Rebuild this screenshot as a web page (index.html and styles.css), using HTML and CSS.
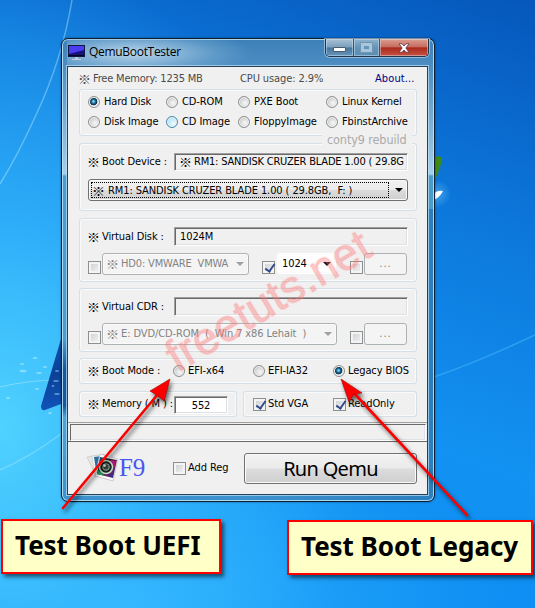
FILE: index.html
```html
<!DOCTYPE html>
<html lang="en">
<head>
<meta charset="utf-8">
<title>QemuBootTester</title>
<link rel="stylesheet" href="styles.css">
</head>
<body>
<div class="desktop">
  <svg class="wallpaper" width="535" height="608" viewBox="0 0 535 608">
    <defs>
      <linearGradient id="leg" x1="0" y1="0" x2="0" y2="1"><stop offset="0" stop-color="#0a52ac"/><stop offset=".5" stop-color="#0b4198"/><stop offset="1" stop-color="#1054b8"/></linearGradient>
      <radialGradient id="glow"><stop offset="0" stop-color="#7fd8ff" stop-opacity=".45"/><stop offset="1" stop-color="#7fd8ff" stop-opacity="0"/></radialGradient>
    </defs>
    <g fill="none" stroke="#bdf0ff">
      <path d="M72 0Q62 60 36 115Q18 155 0 184" stroke-width="1.5" opacity=".4"/>
      <path d="M0 387Q28 380 61 380" opacity=".45"/>
      <path d="M0 470Q28 458 61 434" stroke-width="1.5" opacity=".35"/>
      <path d="M434 377Q480 361 535 335" stroke="#58c2ff" stroke-width="1.5" opacity=".45"/>
    </g>
    <g fill="#c9f1ff" opacity=".5">
      <ellipse cx="23" cy="371" rx="3.5" ry="1.2"/><ellipse cx="35" cy="358" rx="2.5" ry="1"/><ellipse cx="39" cy="373" rx="3" ry="1"/><ellipse cx="37" cy="389" rx="2" ry="1"/><ellipse cx="8" cy="398" rx="2" ry="1"/><ellipse cx="45" cy="367" rx="2" ry="1"/><ellipse cx="50" cy="413" rx="2" ry="1"/><ellipse cx="22" cy="364" rx="2" ry="1"/>
    </g>
    <path d="M61 339L41 406Q41 411 45 410L61 404Z" fill="url(#leg)"/>
    <g fill="#8fd0f5" opacity=".55"><ellipse cx="57" cy="371" rx="2" ry="1"/><ellipse cx="56" cy="381" rx="3" ry="1"/><ellipse cx="57" cy="394" rx="3" ry="1"/><ellipse cx="53" cy="386" rx="1.5" ry="1"/></g>
    <circle cx="437" cy="194" r="14" fill="url(#glow)"/>
    <path d="M434 157Q441 155 442 159Q441 167 434 182Z" fill="#3f8a16"/>
    <path d="M434 194Q437 190 443 191Q440 197 434 200Z" fill="#fff"/>
  </svg>

  <main class="window">
    <header class="titlebar">
      <svg class="app-icon" width="17" height="16" viewBox="0 0 17 16"><rect x=".5" y=".5" width="16" height="11" fill="#15127c" stroke="#11183c"/><path d="M1 1h15v4L1 9z" fill="#4b3df0"/><path d="M1 10.5h15" stroke="#050527"/><path d="M7 12h3v2h3v1H4v-1h3z" fill="#c2cad3"/></svg>
      <h1>QemuBootTester</h1>
      <div class="captions">
        <span class="cap min"><i></i></span>
        <span class="cap max"><i></i></span>
        <span class="cap close"><svg width="12" height="10" viewBox="0 0 12 10"><path d="M1 .8h3L6 3 8 .8h3L7.8 5 11 9.2H8L6 7 4 9.2H1L4.200 5z" fill="#fff" stroke="#5d3440" stroke-width=".8"/></svg></span>
      </div>
    </header>
    <section class="client">
      <div class="info"><b>※</b><span class="t-free">Free Memory: 1235 MB</span><span class="t-cpu">CPU usage: 2.9%</span><span class="t-about">About...</span></div>

      <div class="group sources">
        <label><i class="radio on"></i>Hard Disk</label><label><i class="radio"></i>CD-ROM</label><label><i class="radio"></i>PXE Boot</label><label><i class="radio"></i>Linux Kernel</label>
        <label><i class="radio"></i>Disk Image</label><label><i class="radio hot"></i>CD Image</label><label><i class="radio"></i>FloppyImage</label><label><i class="radio"></i>FbinstArchive</label>
        <span class="rebuild">conty9 rebuild</span>
      </div>

      <div class="group device">
        <div class="line"><b>※</b><span class="name">Boot Device :</span><div class="field"><b>※</b><span class="t-dev">RM1: SANDISK CRUZER BLADE 1.00 ( 29.8G</span></div></div>
        <div class="combo wide"><div class="focus"><b>※</b><span class="t-pick">RM1: SANDISK CRUZER BLADE 1.00 ( 29.8GB,&nbsp; F: )</span></div><i class="arrow"></i></div>
      </div>

      <div class="group virtual">
        <div class="line"><b>※</b><span class="name">Virtual Disk :</span><div class="field"><span class="t-size">1024M</span></div></div>
        <div class="options">
          <i class="check"></i><div class="combo off hd"><b>※</b><span class="t-hd">HD0: VMWARE&nbsp; VMWA</span><i class="arrow"></i></div>
          <i class="check on c2"></i><div class="combo size"><span>1024</span><i class="arrow"></i></div>
          <i class="check c3"></i><div class="more">...</div>
        </div>
      </div>

      <div class="group virtual">
        <div class="line"><b>※</b><span class="name">Virtual CDR :</span><div class="field"></div></div>
        <div class="options">
          <i class="check"></i><div class="combo off cd"><b>※</b><span class="t-cd">E: DVD/CD-ROM&nbsp; (&nbsp; Win 7 x86 Lehait&nbsp; )</span><i class="arrow"></i></div>
          <i class="check c3"></i><div class="more">...</div>
        </div>
      </div>

      <div class="group mode">
        <b>※</b><span class="name">Boot Mode :</span><label><i class="radio"></i>EFI-x64</label><label><i class="radio"></i>EFI-IA32</label><label><i class="radio on"></i>Legacy BIOS</label>
      </div>

      <div class="pair">
        <div class="group memory"><b>※</b><span class="name">Memory ( M ) :</span><div class="num">552</div></div>
        <div class="group flags"><label><i class="check on"></i>Std VGA</label><label><i class="check on"></i>ReadOnly</label></div>
      </div>

      <div class="status"><div></div></div>

      <footer class="actions">
        <svg class="logo" width="33" height="31" viewBox="0 0 33 31">
          <defs><linearGradient id="lens" x1="0" y1="0" x2="1" y2="1"><stop offset="0" stop-color="#1c6d94"/><stop offset=".35" stop-color="#12251f"/><stop offset=".65" stop-color="#62215c"/><stop offset="1" stop-color="#2432b0"/></linearGradient></defs>
          <path d="M1 4L18 1l3 19-11 3z" fill="#e6e7e3" stroke="#c5c6c4" stroke-width=".7"/>
          <path d="M6 3L26 2l1 20-18 2z" fill="#f5f6f5" stroke="#ccc" stroke-width=".7"/><path d="M8 4l8-1-1 18-5-4z" fill="#2d6da3"/>
          <path d="M14 1l18 5-5 22-18-5z" fill="#fafafa" stroke="#bbb" stroke-width=".7"/>
          <path d="M14 4l17 3-4 18-16-4z" fill="url(#lens)"/><path d="M24 6.500l6 1.500-2 8z" fill="#b01773"/><path d="M12 17l-1 4 8 2z" fill="#21a35a"/>
          <circle cx="20" cy="14" r="6.500" fill="#17251e" stroke="#cbdccc" stroke-width="1.500"/><circle cx="20" cy="14" r="3.300" fill="#34453b" stroke="#9aaa9b"/><circle cx="18.500" cy="12.500" r="1.300" fill="#fff"/>
        </svg>
        <span class="f9">F9</span>
        <label class="reg"><i class="check"></i>Add Reg</label>
        <div class="run">Run Qemu</div>
      </footer>
    </section>
  </main>

  <div class="watermark">freetuts.net</div>
  <svg class="arrows" width="535" height="608" viewBox="0 0 535 608">
    <g fill="#fa0000" stroke="#fa0000">
      <path d="M63 508L158 394" stroke-width="2.600" stroke-linecap="round"/><path d="M170 379L164 401 158 396 150 391Z" stroke="#a00" stroke-width=".6"/>
      <path d="M467 515L353 392" stroke-width="2.600" stroke-linecap="round"/><path d="M341 379L362 393 354 394 349 402Z" stroke="#a00" stroke-width=".6"/>
    </g>
  </svg>
  <div class="callout uefi"><span>Test Boot UEFI</span></div>
  <div class="callout legacy"><span>Test Boot Legacy</span></div>
</div>
</body>
</html>
```
FILE: styles.css
```css
* { box-sizing: border-box; }
html, body { margin: 0; }
body { width: 535px; height: 608px; overflow: hidden; font: 11px/14px "DejaVu Sans Condensed", "DejaVu Sans", sans-serif; font-stretch: condensed; letter-spacing: -.1px; color: #000; }
.desktop {
  position: relative; width: 535px; height: 608px; overflow: hidden; padding: 38px 0 0 61px;
  background:
    radial-gradient(ellipse 360px 470px at 0 430px, rgba(84,214,255,.95), rgba(60,190,255,.65) 45%, rgba(40,160,255,0) 100%),
    radial-gradient(ellipse 380px 170px at 130px 608px, rgba(50,184,255,.8), rgba(50,184,255,0)),
    linear-gradient(200deg, #0657bb 0%, #0d78dc 30%, #1292f2 60%, #0a89f4 100%);
}
.wallpaper, .arrows { position: absolute; left: 0; top: 0; }
.arrows { filter: drop-shadow(2px 3px 2px rgba(0,0,0,.6)); }

.window {
  position: relative; width: 374px; height: 464px; padding: 0 6px 7px 5px; border: 1px solid #101f30; border-radius: 7px;
  background:
    linear-gradient(90deg, rgba(43,127,190,0) 50%, #2b7fbe 100%) 0 170px / 100% 300px no-repeat,
    linear-gradient(#3d80b8 0, #4f8fc3 30px, #a5cfea 135px, #4a9ccc 137px, #4a9dd2 300px, #1856a0 330px, #1856a0 367px, #4ba5d8 378px, #3b91cc 100%);
  box-shadow: inset 0 0 0 1px rgba(190,230,250,.85), 0 0 2px rgba(0,0,0,.5);
}
.titlebar { display: flex; height: 27px; padding-left: 1px; background: radial-gradient(ellipse 120px 25px at 65px 14px, rgba(190,217,237,.95), rgba(130,180,215,.4) 70%, rgba(100,160,200,0)); }
.app-icon { margin-top: 6px; }
h1 { margin: 3px 0 0 4px; width: 145px; font: 12px/20px "Open Sans", "Noto Sans", sans-serif; letter-spacing: -.35px; letter-spacing: -.3px; }
.captions { display: flex; width: 104px; height: 18px; margin-left: auto; margin-right: -1px; border: 1px solid #20354c; border-top: 0; border-radius: 0 0 5px 5px; overflow: hidden; box-shadow: 0 0 0 1px rgba(195,222,240,.6); }
.cap { display: flex; justify-content: center; align-items: center; width: 28px; border-right: 1px solid #38546f; background: linear-gradient(#a9c2d6, #7a9fbe 48%, #47759c 52%, #6596bd); box-shadow: inset 0 0 0 1px rgba(220,235,245,.45); }
.cap.max { width: 26px; background: linear-gradient(#8fb3cf, #6394b9 50%, #5a8db4); }
.cap.close { flex: 1; border: 0; background: linear-gradient(#dba093, #c66c5e 46%, #ab2b1d 52%, #c65143); }
.min i { width: 13px; height: 5px; margin-top: 4px; border: 1px solid #505b66; border-radius: 1px; background: #fff; }
.max i { width: 11px; height: 9px; border: 3px solid #a9c5da; outline: 1px solid #7297b4; }

.client { width: 361px; height: 429px; padding: 2px 10px 0 11px; background: #f0f0f0; border: 1px solid #26405a; box-shadow: 0 0 0 1px rgba(190,225,245,.7); }
b { flex: none; width: 13px; font: 13px/14px "Noto Sans CJK SC", sans-serif; text-indent: -1px; }
span, label { white-space: nowrap; }
.info { display: flex; height: 20px; align-items: center; color: #4b4b4b; }
.t-free { width: 148px; padding-left: 1px; letter-spacing: -.2px; }
.t-cpu { width: 135px; }
.t-about { color: #000080; letter-spacing: .1px; }
.group { position: relative; width: 338px; border: 1px solid #d5dfe5; border-radius: 3px; box-shadow: inset 0 0 0 1px #fafafa; }
label { display: flex; align-items: center; }
.radio { flex: none; width: 12px; height: 12px; margin-right: 4px; border: 1px solid #8e8f8f; border-radius: 50%; background: radial-gradient(circle at 60% 60%, #f3f3f3 10%, #bfc2c4 80%); box-shadow: inset 0 0 0 1px #f4f4f4; }
.radio.on { background: radial-gradient(circle at 45% 45%, #7bd5ef 0 8%, #1b6d98 25%, #0b2d47 45%, #dfe5e8 54%); }
.radio.hot { border-color: #4689ad; background: radial-gradient(circle at 65% 65%, #eefaff, #9cd6f2); }
.sources { display: grid; grid-template-columns: 78px 72px 88px 80px; grid-template-rows: 20px 20px; padding: 2px 0 0 8px; height: 47px; }
.rebuild { position: absolute; left: 242px; top: 42px; padding: 0 5px; background: #f0f0f0; color: #aaa; font-size: 12.500px; line-height: 16px; z-index: 1; }
.device { height: 68px; margin-top: 7px; padding: 8px 0 0 8px; }
.line { display: flex; align-items: center; height: 19px; }
.name { width: 73px; padding-left: 1px; }
.field { display: flex; align-items: center; width: 234px; height: 18px; padding-left: 5px; overflow: hidden; border: 1px solid #fff; border-top-color: #a0a0a0; border-left-color: #a0a0a0; box-shadow: inset 1px 1px #696969, inset -1px -1px #dce1e5; }
.t-dev { padding-left: 1px; letter-spacing: -.2px; }
.t-pick { padding-left: 2px; letter-spacing: -.1px; }
.combo { position: relative; display: flex; align-items: center; height: 22px; border: 1px solid #707070; border-radius: 3px; background: linear-gradient(#f2f2f2, #ebebeb 48%, #dcdcdc 52%, #cfcfcf); box-shadow: inset 0 0 0 1px #fafafa; }
.wide { width: 320px; margin-top: 8px; padding-left: 2px; }
.focus { display: flex; align-items: center; width: 298px; height: 16px; padding: 1px 0 0 1px; border: 1px dotted #000; }
.arrow { position: absolute; right: 4px; top: 8px; border: 4px solid transparent; border-top-color: #000; border-bottom: 0; }
.virtual { height: 64px; margin-top: 6px; padding: 8px 0 0 8px; }
.device + .virtual { margin-top: 7px; }
.virtual .field { height: 19px; }
.options { display: flex; margin-top: 7px; }
.check { position: relative; flex: none; width: 13px; height: 13px; border: 1px solid #8e8f8f; background: linear-gradient(135deg, #c9ccd0, #f6f6f6); box-shadow: inset 0 0 0 2px #f4f4f4; }
.check.on::after { content: ""; position: absolute; left: 3.500px; top: 0; width: 4px; height: 8px; border: solid #344a8c; border-width: 0 2px 2px 0; transform: rotate(35deg); }
.options .check { margin-top: 8px; }
.combo.off { color: #838383; border-color: #adb2b5; background: #f4f4f4; margin-left: 1px; padding-left: 4px; }
.off .arrow { border-top-color: #a0a0a0; }
.hd { width: 147px; }
.t-hd { padding-left: 1px; letter-spacing: -.15px; }
.c2 { margin-left: 13px; }
.size { width: 59px; height: 21px; margin-left: 2px; padding-left: 4px; border-color: #fff; background: #fff; }
.c3 { margin-left: auto; }
.more { width: 43px; height: 22px; margin: 0 9px 0 1px; border: 1px solid #adb2b5; border-radius: 3px; background: #f4f4f4; color: #838383; text-align: center; line-height: 19px; letter-spacing: 1px; }
.cd { width: 235px; }
.t-cd { padding-left: 1px; letter-spacing: -.1px; }
.mode { display: flex; align-items: center; height: 26px; margin-top: 6px; padding-left: 8px; }
.mode .name { width: 72px; }
.mode label { width: 80px; }
.mode .radio { margin-right: 3px; }
.pair { display: flex; gap: 6px; margin-top: 7px; }
.memory { display: flex; align-items: center; width: 158px; height: 26px; padding-left: 8px; }
.num { width: 54px; height: 18px; margin-top: 1px; border: 1px solid #fff; border-top-color: #a0a0a0; border-left-color: #a0a0a0; box-shadow: inset 1px 1px #696969, inset -1px -1px #dce1e5; background: #fff; text-align: center; line-height: 17px; }
.flags { display: flex; width: 174px; height: 26px; padding-left: 9px; }
.flags label { width: 80px; }
.flags .check, .reg .check { margin-right: 2px; }
.status { height: 20px; margin: 5px -10px 0 -11px; padding: 1px 1px 0 2px; border-top: 1px solid #a0a0a0; border-bottom: 1px solid #696969; }
.status div { height: 17px; border: 1px solid #fff; border-top-color: #696969; border-left-color: #696969; box-shadow: inset -1px -1px #dce1e5; }
.actions { display: flex; height: 52px; align-items: center; padding-left: 7px; }
.f9 { width: 54px; color: #4957f0; font: 25px/30px "Liberation Serif", serif; }
.reg { width: 71px; }
.run { width: 173px; height: 31px; border: 1px solid #707070; border-radius: 3px; background: linear-gradient(#f2f2f2, #ebebeb 48%, #dcdcdc 52%, #cfcfcf); box-shadow: inset 0 0 0 1px #fafafa; font: 20px/29px "Noto Sans", sans-serif; letter-spacing: -.7px; text-align: center; }

.watermark { position: absolute; left: 177px; top: 336px; transform-origin: 0 36px; transform: rotate(-31deg); font: 45px/44px "Liberation Sans", sans-serif; letter-spacing: .4px; color: rgba(255,120,120,.38); -webkit-text-stroke: 2px rgba(255,120,120,.2); }
.callout { position: absolute; display: flex; align-items: center; border: 2px solid #f00; background: #ffffc8; box-shadow: 3px 3px 4px rgba(0,0,0,.55); font: 700 26px/34px "Noto Sans", sans-serif; letter-spacing: -.05px; padding-bottom: 4px; }
.uefi { left: 1px; top: 519px; width: 220px; height: 55px; padding-left: 12px; }
.legacy { left: 287px; top: 520px; width: 246px; height: 55px; padding-left: 12px; }
```
